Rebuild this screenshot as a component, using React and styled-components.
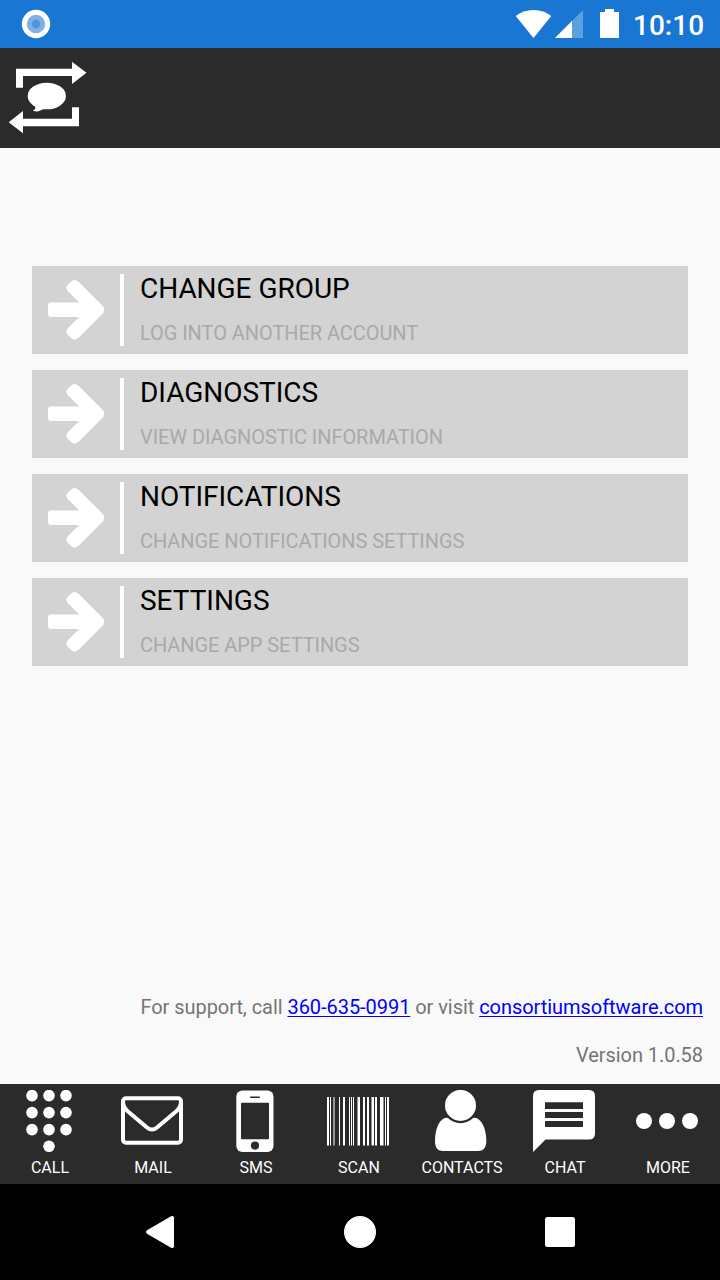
import styled, { createGlobalStyle } from "styled-components";

const GlobalStyle = createGlobalStyle`
  * {
    box-sizing: border-box;
  }

  body {
    margin: 0;
    font-family: Roboto, sans-serif;
    background-color: #f9f9f9;
  }

  svg {
    display: block;
  }
`;

const Screen = styled.div`
  width: 720px;
  height: 1280px;
  display: flex;
  flex-direction: column;
  overflow: hidden;
`;

const StatusBar = styled.div`
  height: 48px;
  flex-shrink: 0;
  display: flex;
  align-items: center;
  padding: 0 16px 0 21px;
  background-color: #1976d2;
`;

const StatusIcons = styled.div`
  margin-left: auto;
`;

const Clock = styled.span`
  width: 71px;
  margin: 3px 0 0 12px;
  text-align: right;
  font-size: 28px;
  font-weight: 500;
  line-height: 34px;
  color: white;
`;

const Header = styled.header`
  height: 100px;
  flex-shrink: 0;
  padding: 12px 8px;
  background-color: #2b2b2b;
`;

const Main = styled.main`
  flex: 1;
  display: flex;
  flex-direction: column;
  padding: 118px 32px 0;
`;

const Menu = styled.div`
  display: flex;
  flex-direction: column;
  gap: 16px;
`;

const MenuItem = styled.div`
  height: 88px;
  display: flex;
  padding: 8px 16px;
  background-color: #d3d3d3;
`;

const Divider = styled.div`
  width: 4px;
  height: 72px;
  margin: 0 16px;
  background-color: white;
`;

const MenuText = styled.div`
  display: flex;
  flex-direction: column;
  justify-content: space-between;
`;

const MenuTitle = styled.div`
  font-size: 28px;
  line-height: 32px;
  margin-top: -1px;
  letter-spacing: -0.03px;
  color: black;
`;

const MenuSubtitle = styled.div`
  font-size: 20px;
  line-height: 24px;
  margin-bottom: 1px;
  letter-spacing: -0.06px;
  color: #a9a9a9;
`;

const Info = styled.div`
  margin: auto -15px 0 0;
  padding-bottom: 17px;
  text-align: right;
  font-size: 20px;
  line-height: 24px;
  letter-spacing: -0.05px;
  color: #757575;
`;

const InfoLine = styled.p`
  margin: 24px 0 0;
`;

const InfoLink = styled.a`
  color: #0000ff;
  text-decoration: underline;
  text-decoration-thickness: 1px;
  text-underline-offset: 2px;
`;

const TabBar = styled.nav`
  height: 100px;
  flex-shrink: 0;
  display: grid;
  grid-template-columns: repeat(7, 98px);
  column-gap: 5px;
  background-color: #2b2b2b;
`;

const Tab = styled.div`
  display: flex;
  flex-direction: column;
  align-items: center;
  padding-top: 6px;
`;

const TabLabel = styled.span`
  margin-top: 6px;
  padding-left: 2px;
  font-size: 16px;
  line-height: 19px;
  color: white;
`;

const NavBar = styled.div`
  height: 96px;
  flex-shrink: 0;
  display: flex;
  align-items: center;
  justify-content: center;
  gap: 160px;
  background-color: black;
`;

const Logo = () => (
  <svg width="80" height="76" viewBox="8 60 80 76" fill="white">
    <path d="M16 87.7V68.7H72V61.7L86.5 72.8L72 84V76H23V87.7Z" />
    <path d="M79 107.3V126.2H23V133.3L8.7 122.3L23 111V118.7H72V107.3Z" />
    <ellipse cx="46.8" cy="96" rx="19.1" ry="13.3" />
    <path d="M34.5 104C36 107.5 35.5 109.3 33 110.8C37 112.2 41 111 43.5 108.5Z" />
  </svg>
);

const ArrowIcon = () => (
  <svg width="56" height="72" viewBox="48 274 56 72" fill="white">
    <path d="M51 302.5H79.3L67.8 291.3Q65 287.6 68 284.5L71.3 281.2Q74.5 278.6 78.5 281.7L103 306.2Q105 309.8 103 313.3L78.5 337.8Q74.5 341 71.3 338.3L68 335.1Q65 332 67.8 328.3L79.3 317H51Q48 317 48 314V305.5Q48 302.5 51 302.5Z" />
  </svg>
);

const CallIcon = () => (
  <svg width="62" height="62" viewBox="18 1090 62 62" fill="white">
    {[1095.6, 1112.6, 1129.6].map((y) =>
      [32, 49, 66].map((x) => <circle key={x + y} cx={x} cy={y} r="5.8" />)
    )}
    <circle cx="49" cy="1146.3" r="5.8" />
  </svg>
);

const MailIcon = () => (
  <svg width="62" height="62" viewBox="121 1090 62 62" fill="none" stroke="white" strokeWidth="4">
    <rect x="123" y="1098.2" width="58" height="44.5" rx="3" />
    <path d="M123 1101C123 1106 125 1109 128 1111.5L147 1127.5Q152 1131.5 157 1127.5L176 1111.5C179 1109 181 1106 181 1101" />
  </svg>
);

const SmsIcon = () => (
  <svg width="62" height="62" viewBox="224 1090 62 62">
    <rect x="236.3" y="1090.6" width="37.2" height="61.4" rx="6" fill="white" />
    <rect x="250" y="1096.5" width="10" height="1.6" rx="0.8" fill="#2b2b2b" />
    <rect x="241" y="1102.7" width="28" height="36.6" rx="1" fill="#2b2b2b" />
    <circle cx="255" cy="1145.6" r="4.1" fill="#2b2b2b" />
  </svg>
);

// [x, width, opacity]
const bars = [
  [0, 2, 1], [3, 1, 1], [6, 2, 0.5], [12, 1, 1], [16, 2, 1], [22, 1, 1],
  [24, 1, 1], [26, 1, 1], [30, 1, 0.5], [31, 2, 1], [36, 2, 1], [40, 2, 1],
  [44, 1, 0.5], [45, 2, 1], [48, 2, 1], [53, 3, 1], [56, 1, 0.5], [58, 1, 1],
  [60, 2, 1],
];

const ScanIcon = () => (
  <svg width="62" height="62" viewBox="0 0 62 62" fill="white">
    {bars.map(([x, w, o]) => (
      <rect key={x} x={x} y="7" width={w} height="48.5" opacity={o} />
    ))}
  </svg>
);

const ContactsIcon = () => (
  <svg width="62" height="62" viewBox="430 1090 62 62" fill="white">
    <path d="M447 1117.8C439 1118 435 1130 435 1141C435 1148 438 1151 443 1151H478C483 1151 486.3 1148 486.3 1141C486.3 1130 482 1118 474 1117.8Z" />
    <circle cx="460.5" cy="1105.4" r="17.8" fill="#2b2b2b" />
    <circle cx="460.5" cy="1105.4" r="15.5" />
  </svg>
);

const ChatIcon = () => (
  <svg width="62" height="62" viewBox="533 1090 62 62">
    <path d="M539 1090H589Q595 1090 595 1096V1133.5Q595 1139.5 589 1139.5H545.5L533 1152V1096Q533 1090 539 1090Z" fill="white" />
    <path d="M545 1102.3H583V1109H545ZM545 1112H583V1118H545ZM545 1121H583V1127H545Z" fill="#2b2b2b" />
  </svg>
);

const MoreIcon = () => (
  <svg width="62" height="62" viewBox="636 1090 62 62" fill="white">
    <circle cx="644" cy="1121" r="8" />
    <circle cx="667" cy="1121" r="8" />
    <circle cx="690" cy="1121" r="8" />
  </svg>
);

const menuItems = [
  { title: "CHANGE GROUP", subtitle: "LOG INTO ANOTHER ACCOUNT" },
  { title: "DIAGNOSTICS", subtitle: "VIEW DIAGNOSTIC INFORMATION" },
  { title: "NOTIFICATIONS", subtitle: "CHANGE NOTIFICATIONS SETTINGS" },
  { title: "SETTINGS", subtitle: "CHANGE APP SETTINGS" },
];

const tabs = [
  { label: "CALL", Icon: CallIcon },
  { label: "MAIL", Icon: MailIcon },
  { label: "SMS", Icon: SmsIcon },
  { label: "SCAN", Icon: ScanIcon },
  { label: "CONTACTS", Icon: ContactsIcon },
  { label: "CHAT", Icon: ChatIcon },
  { label: "MORE", Icon: MoreIcon },
];

const App = () => {
  return (
    <Screen>
      <GlobalStyle />
      <StatusBar>
        <svg width="30" height="30" viewBox="0 0 30 30">
          <circle cx="15" cy="15" r="14.2" fill="white" />
          <circle cx="15" cy="15" r="9.2" fill="#7fb1e6" />
          <circle cx="15" cy="15" r="4.2" fill="#4f95dc" />
        </svg>
        <StatusIcons>
          <svg width="106" height="32" viewBox="515 8 106 32" fill="white">
            <path d="M533.5 38L515.7 16Q523 10 533.5 10Q544 10 551.3 16Z" />
            <path d="M555 38L583 10V38Z" opacity="0.3" />
            <path d="M555 38L572 21V38Z" />
            <path d="M600 12H605V9H614V12H619V38H600Z" />
          </svg>
        </StatusIcons>
        <Clock>10:10</Clock>
      </StatusBar>
      <Header>
        <Logo />
      </Header>
      <Main>
        <Menu>
          {menuItems.map((item) => (
            <MenuItem key={item.title}>
              <ArrowIcon />
              <Divider />
              <MenuText>
                <MenuTitle>{item.title}</MenuTitle>
                <MenuSubtitle>{item.subtitle}</MenuSubtitle>
              </MenuText>
            </MenuItem>
          ))}
        </Menu>
        <Info>
          <InfoLine>
            For support, call <InfoLink href="tel:3606350991">360-635-0991</InfoLink> or visit{" "}
            <InfoLink href="#">consortiumsoftware.com</InfoLink>
          </InfoLine>
          <InfoLine>Version 1.0.58</InfoLine>
        </Info>
      </Main>
      <TabBar>
        {tabs.map(({ label, Icon }) => (
          <Tab key={label}>
            <Icon />
            <TabLabel>{label}</TabLabel>
          </Tab>
        ))}
      </TabBar>
      <NavBar>
        <svg width="40" height="40" viewBox="140 1212 40 40" fill="white">
          <path d="M147 1230.3L171 1216.3Q174 1215.3 174 1218V1246Q174 1248.7 171 1247.7L147 1233.7Q145 1232 147 1230.3Z" />
        </svg>
        <svg width="40" height="40" viewBox="0 0 40 40" fill="white">
          <circle cx="20" cy="20" r="16" />
        </svg>
        <svg width="40" height="40" viewBox="0 0 40 40" fill="white">
          <rect x="5" y="5" width="30" height="30" rx="2.5" />
        </svg>
      </NavBar>
    </Screen>
  );
};

export default App;
